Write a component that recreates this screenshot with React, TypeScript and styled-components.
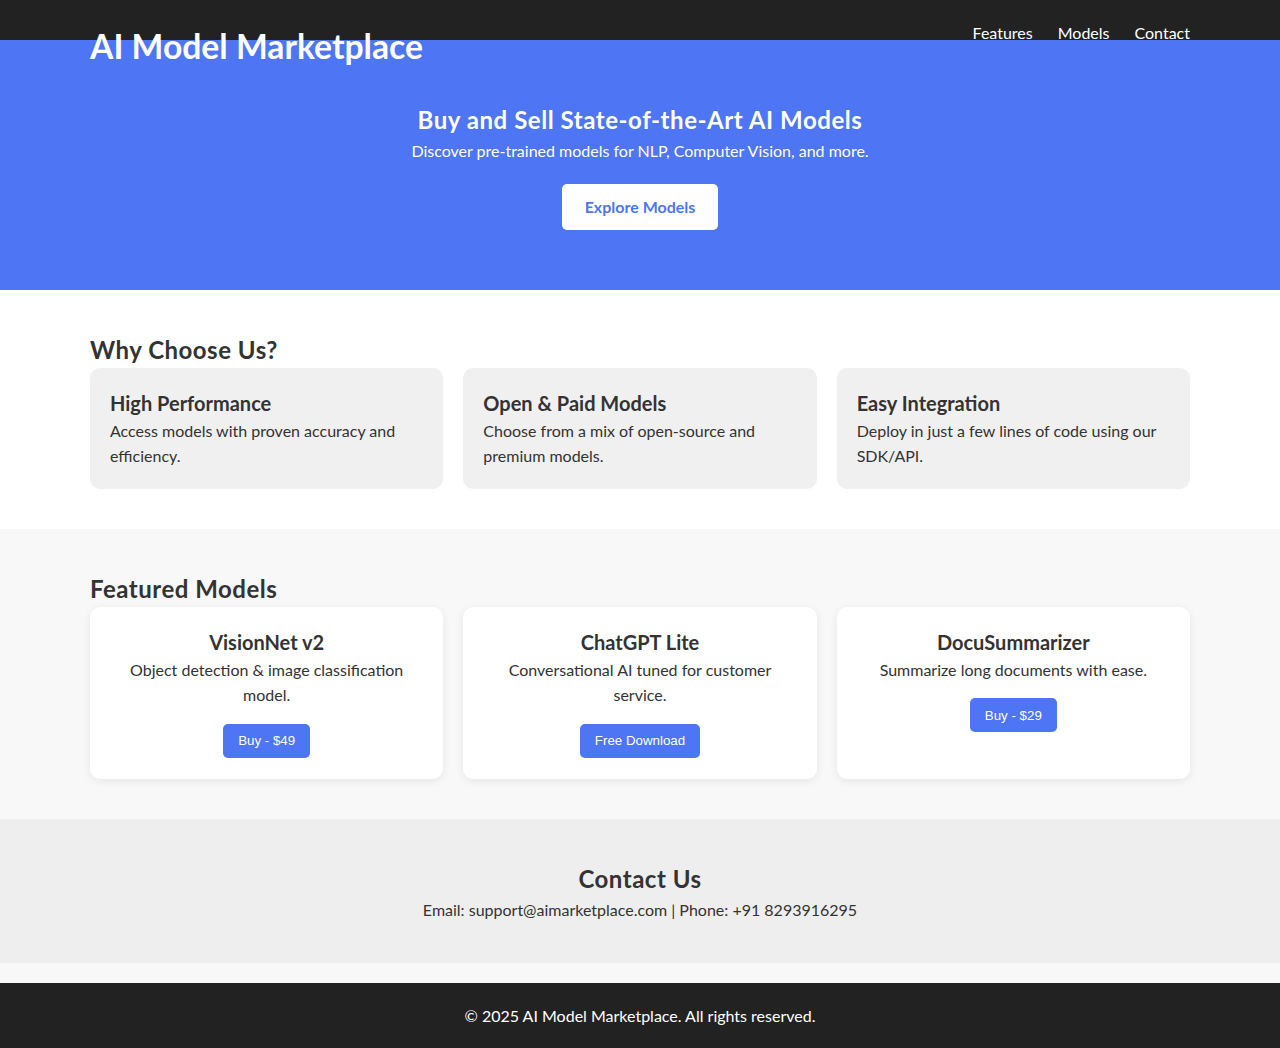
import React from "react";
import styled, { createGlobalStyle } from "styled-components";

const GlobalStyle = createGlobalStyle`
  * { box-sizing: border-box; }
  body {
    margin: 0;
    background: #f8f8f8;
    color: #333;
    font-family: Lato, "Open Sans", sans-serif;
    font-size: 16px;
  }
  h1, h2, h3, p { margin: 0; }
`;

const Container = styled.div`
  max-width: 1100px;
  margin: 0 auto;
`;

const Header = styled.header`
  background: #222;
  height: 40px;
  color: #fff;
`;

const HeaderInner = styled(Container)`
  display: flex;
  justify-content: space-between;
  align-items: flex-start;
`;

const Logo = styled.h1`
  margin-top: 26px;
  font-size: 33.7px;
  line-height: 40.8px;
  font-weight: 700;
  color: #fff;
  position: relative;
`;

const Nav = styled.nav`
  margin-top: 21px;
  display: flex;
  gap: 25px;
`;

const NavLink = styled.a`
  color: #fff;
  text-decoration: none;
  font-size: 16px;
  line-height: 24px;
`;

const Hero = styled.section`
  background: #4e75f4;
  color: #fff;
  text-align: center;
  padding: 66px 20px 60px;
  display: flex;
  flex-direction: column;
  align-items: center;
`;

const HeroTitle = styled.h2`
  font-size: 24px;
  line-height: 28.8px;
  font-weight: 700;
  letter-spacing: 0.55px;
`;

const HeroText = styled.p`
  margin-top: 4px;
  font-size: 16px;
  line-height: 24px;
`;

const HeroButton = styled.a`
  margin-top: 21px;
  height: 46px;
  padding: 0 23px;
  display: inline-flex;
  align-items: center;
  background: #fff;
  color: #4e75f4;
  font-weight: 700;
  font-size: 16px;
  border-radius: 5px;
  text-decoration: none;
`;

const Section = styled.section<{ $bg: string }>`
  background: ${(p) => p.$bg};
  padding: 46px 0 40px;
`;

const SectionTitle = styled.h2<{ $center?: boolean }>`
  font-size: 24px;
  line-height: 28.8px;
  font-weight: 700;
  letter-spacing: 0.5px;
  color: #333;
  margin-bottom: 3px;
  text-align: ${(p) => (p.$center ? "center" : "left")};
`;

const Grid = styled.div`
  display: grid;
  grid-template-columns: repeat(3, 1fr);
  gap: 20px;
`;

const FeatureCard = styled.div`
  background: #f0f0f0;
  border-radius: 10px;
  padding: 23px 20px 20px;
`;

const ModelCard = styled.div`
  background: #fff;
  border-radius: 10px;
  padding: 23px 20px 21px;
  text-align: center;
  box-shadow: 0 2px 8px rgba(0, 0, 0, 0.08);
  display: flex;
  flex-direction: column;
  align-items: center;
`;

const CardTitle = styled.h3`
  font-size: 20px;
  line-height: 24px;
  font-weight: 700;
  color: #333;
`;

const CardText = styled.p`
  margin-top: 3px;
  font-size: 16px;
  line-height: 25.6px;
  color: #333;
`;

const BuyButton = styled.button`
  margin-top: 16px;
  height: 34px;
  padding: 0 15px;
  border: none;
  border-radius: 5px;
  background: #4e75f4;
  color: #fff;
  font-family: "Liberation Sans", Arial, sans-serif;
  font-size: 13.333px;
  cursor: pointer;
`;

const ContactSection = styled.section`
  background: #eee;
  padding: 46px 20px 41px;
  margin-bottom: 20px;
  text-align: center;
`;

const ContactText = styled.p`
  font-size: 16px;
  line-height: 25.6px;
`;

const Footer = styled.footer`
  background: #222;
  color: #fff;
  text-align: center;
  padding: 20px 0;
  font-size: 16px;
  line-height: 25px;
`;

const features = [
  { title: "High Performance", text: "Access models with proven accuracy and efficiency." },
  { title: "Open & Paid Models", text: "Choose from a mix of open-source and premium models." },
  { title: "Easy Integration", text: "Deploy in just a few lines of code using our SDK/API." },
];

const models = [
  { title: "VisionNet v2", text: "Object detection & image classification model.", cta: "Buy - $49" },
  { title: "ChatGPT Lite", text: "Conversational AI tuned for customer service.", cta: "Free Download" },
  { title: "DocuSummarizer", text: "Summarize long documents with ease.", cta: "Buy - $29" },
];

export default function App() {
  return (
    <>
      <GlobalStyle />
      <Header>
        <HeaderInner>
          <Logo>AI Model Marketplace</Logo>
          <Nav>
            <NavLink href="#features">Features</NavLink>
            <NavLink href="#models">Models</NavLink>
            <NavLink href="#contact">Contact</NavLink>
          </Nav>
        </HeaderInner>
      </Header>
      <Hero>
        <HeroTitle>Buy and Sell State-of-the-Art AI Models</HeroTitle>
        <HeroText>Discover pre-trained models for NLP, Computer Vision, and more.</HeroText>
        <HeroButton href="#models">Explore Models</HeroButton>
      </Hero>
      <Section $bg="#fff" id="features">
        <Container>
          <SectionTitle>Why Choose Us?</SectionTitle>
          <Grid>
            {features.map((f) => (
              <FeatureCard key={f.title}>
                <CardTitle>{f.title}</CardTitle>
                <CardText>{f.text}</CardText>
              </FeatureCard>
            ))}
          </Grid>
        </Container>
      </Section>
      <Section $bg="#f8f8f8" id="models">
        <Container>
          <SectionTitle>Featured Models</SectionTitle>
          <Grid>
            {models.map((m) => (
              <ModelCard key={m.title}>
                <CardTitle>{m.title}</CardTitle>
                <CardText>{m.text}</CardText>
                <BuyButton>{m.cta}</BuyButton>
              </ModelCard>
            ))}
          </Grid>
        </Container>
      </Section>
      <ContactSection id="contact">
        <SectionTitle $center>Contact Us</SectionTitle>
        <ContactText>Email: support@aimarketplace.com | Phone: +91 8293916295</ContactText>
      </ContactSection>
      <Footer>© 2025 AI Model Marketplace. All rights reserved.</Footer>
    </>
  );
}
